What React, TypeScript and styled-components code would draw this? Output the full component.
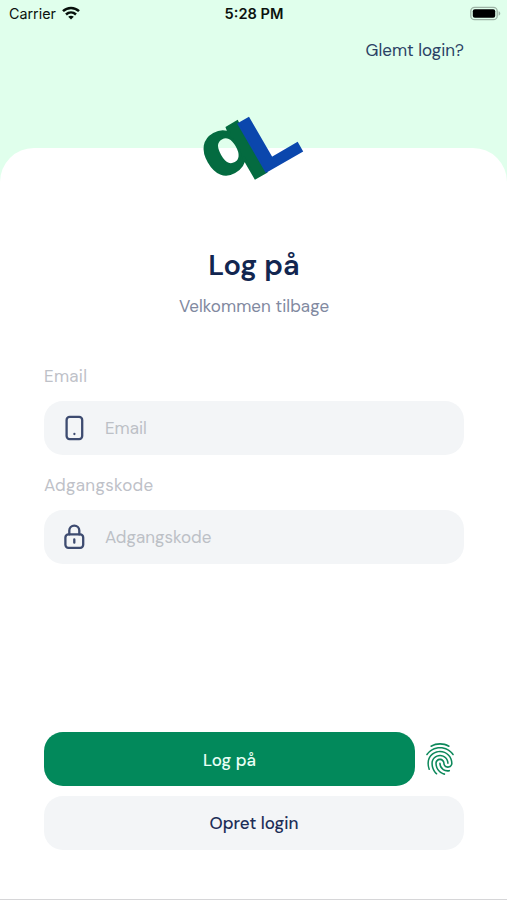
import React from 'react';
import styled, { createGlobalStyle } from 'styled-components';
import { IoFingerPrintOutline } from 'react-icons/io5';

const GlobalStyle = createGlobalStyle`
  *, *::before, *::after { box-sizing: border-box; }
  body { margin: 0; background: #fff; }
  button, input { font: inherit; letter-spacing: inherit; border: 0; padding: 0; margin: 0; }
`;

const Screen = styled.div`
  width: 507px;
  height: 900px;
  display: flex;
  flex-direction: column;
  overflow: hidden;
  background: #e0ffec;
  border-bottom: 1px solid #d6d6d8;
  font-family: 'DM Sans', Inter, sans-serif;
  font-size: 17px;
  line-height: 20px;
  color: #1d2e57;
`;

const StatusBar = styled.header`
  height: 27px;
  flex: none;
  display: grid;
  grid-template-columns: 1fr auto 1fr;
  align-items: center;
  padding: 0 7px 0 9px;
  font-family: Inter, sans-serif;
  font-size: 14.3px;
  color: #0b120e;
`;

const Carrier = styled.div`
  display: flex;
  align-items: center;
  gap: 6px;
`;

const WifiIcon = styled.svg`
  margin-top: -2px;
`;

const Clock = styled.time`
  margin-right: 1px;
  font-size: 14.6px;
  font-weight: 600;
`;

const Battery = styled.svg`
  justify-self: end;
  overflow: visible;
`;

const TopLinks = styled.nav`
  height: 121px;
  flex: none;
  display: flex;
  justify-content: flex-end;
  align-items: flex-start;
  padding: 13px 43px 0 0;
`;

const TextLink = styled.a`
  color: #2b4265;
`;

const Sheet = styled.main`
  flex: 1;
  display: flex;
  flex-direction: column;
  padding: 0 43px 49px 44px;
  border-radius: 34px 34px 0 0;
  background: #fff;
`;

const Logo = styled.svg`
  display: block;
  width: 110px;
  height: 80px;
  margin: -40px auto 0;
  flex: none;
  overflow: visible;
`;

const LogoLetter = styled.text<{ $color: string; $size: number; $weight: number }>`
  font-family: 'Liberation Sans', sans-serif;
  font-size: ${p => p.$size}px;
  font-weight: 700;
  fill: ${p => p.$color};
  stroke: ${p => p.$color};
  stroke-width: ${p => p.$weight};
`;

const Title = styled.h1`
  margin: 59px 0 0;
  font-size: 29px;
  font-weight: 600;
  line-height: 36px;
  text-align: center;
  color: #122650;
`;

const Subtitle = styled.p`
  margin: 13px 0 0;
  letter-spacing: 0.06px;
  text-align: center;
  color: #8189a0;
`;

const Form = styled.form`
  flex: 1;
  display: flex;
  flex-direction: column;
  margin-top: 50px;
`;

const Field = styled.div`
  display: flex;
  flex-direction: column;
  gap: 15px;
  margin-bottom: 20px;
`;

const Label = styled.label`
  letter-spacing: 0.28px;
  color: #bec1c8;
`;

const InputBox = styled.div`
  height: 54px;
  display: flex;
  align-items: center;
  gap: 18px;
  padding: 0 18px;
  border-radius: 19px;
  background: #f3f5f7;
`;

const FieldIcon = styled.svg`
  width: 25px;
  height: 28px;
  flex: none;
  fill: none;
  stroke: #3d4b70;
  stroke-width: 2.3;
  stroke-linecap: round;
  stroke-linejoin: round;
`;

const Input = styled.input`
  flex: 1;
  min-width: 0;
  height: 24px;
  outline: 0;
  background: transparent;
  color: #1d2e57;
  &::placeholder { color: #bcc0c6; opacity: 1; }
`;

const Actions = styled.div`
  display: flex;
  flex-direction: column;
  gap: 10px;
  margin-top: auto;
`;

const SignInRow = styled.div`
  display: flex;
  align-items: center;
  gap: 8px;
`;

const Button = styled.button<{ $primary?: boolean }>`
  flex: ${p => (p.$primary ? '0 0 371px' : 'none')};
  height: 54px;
  padding-top: ${p => (p.$primary ? '1px' : '0')};
  border-radius: 19px;
  font-weight: 500;
  background: ${p => (p.$primary ? '#02895b' : '#f3f5f7')};
  color: ${p => (p.$primary ? '#e9fff5' : '#1d2e57')};
`;

const FingerprintButton = styled.button`
  display: flex;
  background: transparent;
  color: #0c885a;
`;

export default function App() {
  return (
    <>
      <GlobalStyle />
      <Screen>
        <StatusBar>
          <Carrier>
            <span>Carrier</span>
            <WifiIcon width="18" height="14" viewBox="0 0 18 14" fill="none" stroke="#07100b" strokeWidth="2.5">
              <path d="M1 5.200C5.500.9 12.500.9 17 5.200" />
              <path d="M4 8.500c2.900-2.700 7.100-2.700 10 0" />
              <path d="M9 13.600l-2.800-2.900c1.600-1.400 4-1.400 5.600 0z" fill="#07100b" stroke="none" />
            </WifiIcon>
          </Carrier>
          <Clock>5:28 PM</Clock>
          <Battery width="30" height="14" viewBox="0 0 30 14">
            <rect x=".8" y=".3" width="26.400" height="12.400" rx="3.800" fill="none" stroke="#9db3a5" strokeWidth="1.300" />
            <rect x="2.800" y="2.200" width="22.400" height="8.600" rx="2" fill="#000" />
            <path d="M28.600 4.300c2.200.7 2.200 3.700 0 4.400z" fill="#9db3a5" />
          </Battery>
        </StatusBar>
        <TopLinks>
          <TextLink>Glemt login?</TextLink>
        </TopLinks>
        <Sheet>
          <Logo viewBox="0 0 110 80" aria-label="qL">
            <g transform="translate(67.200 64.300) rotate(-30)">
              <LogoLetter transform="translate(-48 -16.800) scale(1.120 1)" $size={79} $weight={2.4} $color="#046b40">q</LogoLetter>
              <LogoLetter x="-5" y="-0.700" $size={80} $weight={2.2} $color="#0b47ad">L</LogoLetter>
            </g>
          </Logo>
          <Title>Log på</Title>
          <Subtitle>Velkommen tilbage</Subtitle>
          <Form>
            <Field>
              <Label htmlFor="email">Email</Label>
              <InputBox>
                <FieldIcon viewBox="0 0 25 28">
                  <rect x="4.600" y="2.900" width="15.600" height="22.200" rx="3" />
                  <path d="M12.400 20v.1" />
                </FieldIcon>
                <Input id="email" placeholder="Email" />
              </InputBox>
            </Field>
            <Field>
              <Label htmlFor="password">Adgangskode</Label>
              <InputBox>
                <FieldIcon viewBox="0 0 25 28">
                  <rect x="3.400" y="11.400" width="17.800" height="13.400" rx="3" />
                  <path d="M7.300 11.400V7.600a5 5 0 0 1 10 0v3.800M12.300 16.500v3.200" />
                </FieldIcon>
                <Input id="password" type="password" placeholder="Adgangskode" />
              </InputBox>
            </Field>
            <Actions>
              <SignInRow>
                <Button type="button" $primary>Log på</Button>
                <FingerprintButton type="button" aria-label="Fingerprint">
                  <IoFingerPrintOutline size={34} />
                </FingerprintButton>
              </SignInRow>
              <Button type="button">Opret login</Button>
            </Actions>
          </Form>
        </Sheet>
      </Screen>
    </>
  );
}
